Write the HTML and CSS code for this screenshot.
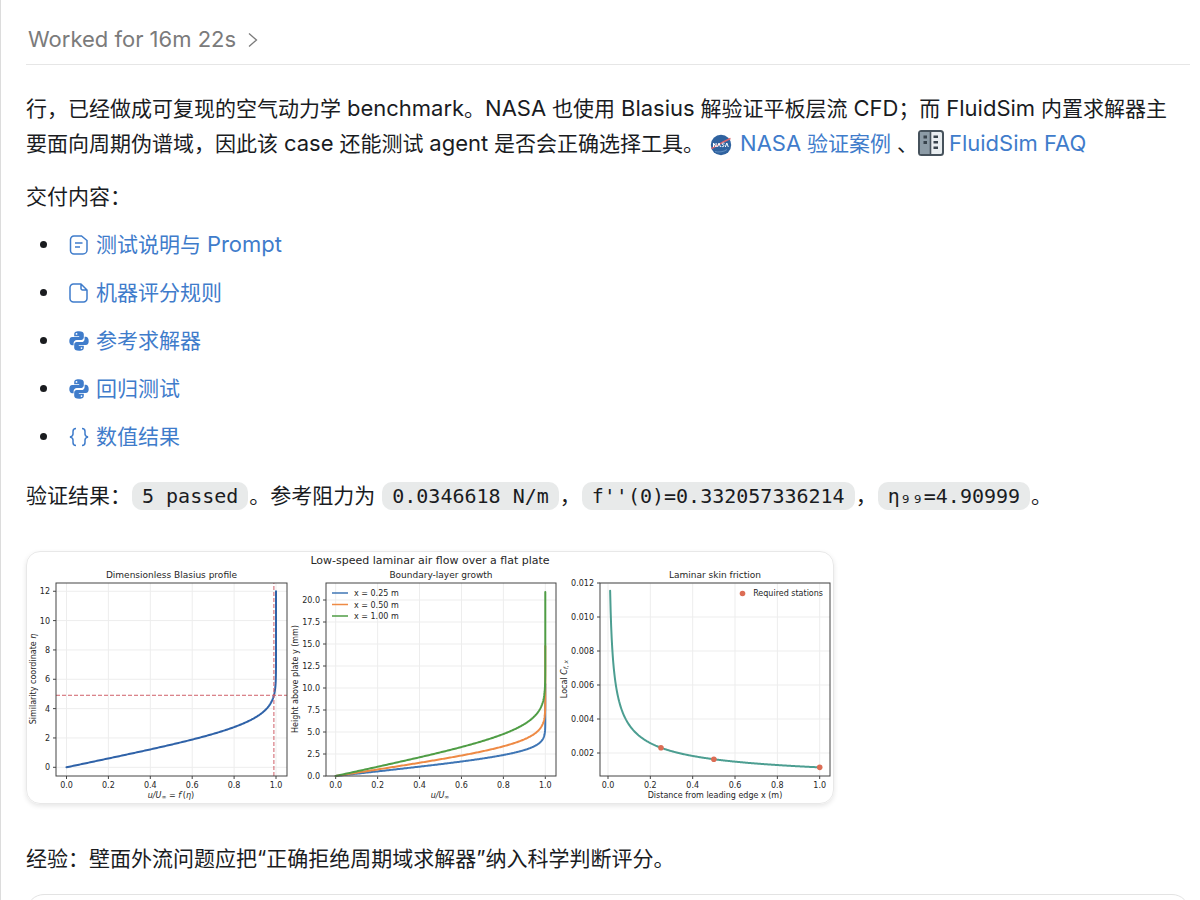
FILE: index.html
```html
<!DOCTYPE html>
<html lang="zh-CN">
<head>
  <meta charset="UTF-8" />
  <meta name="viewport" content="width=device-width, initial-scale=1.0"/>
  <title>Blasius benchmark</title>
  <link rel="stylesheet" href="styles.css">
</head>
<body>

  <!-- Shared icons -->
  <svg class="sprite" aria-hidden="true">
    <symbol id="python" viewBox="0 0 20 20">
      <path fill="currentColor" fill-rule="evenodd" d="M9.9.3c-3.700 0-4.700 1.300-4.700 3v2h5v.6H3.300C1.300 5.900.3 7.500.3 10s1.100 4.200 2.900 4.200h1.400v-2.100c0-1.800 1.400-3.200 3.200-3.200h4.500c1.400 0 2.500-1.100 2.500-2.600v-3C14.800 1.400 13.200.3 9.900.3zM7.500 2a.9.9 0 1 1 0 1.800.9.9 0 0 1 0-1.800z"/>
      <path fill="currentColor" fill-rule="evenodd" d="M10.100 19.700c3.700 0 4.700-1.300 4.700-3v-2h-5v-.6h6.900c2 0 3-1.600 3-4.100s-1.100-4.200-2.900-4.200h-1.200v2.100c0 1.800-1.400 3.200-3.200 3.200H7.700c-1.400 0-2.500 1.100-2.500 2.600v3c0 1.900 1.600 3 4.900 3zM12.500 18a.9.9 0 1 1 0-1.800.9.9 0 0 1 0 1.800z"/>
    </symbol>
  </svg>

  <header class="topbar">
    <button class="worked" type="button">Worked for 16m 22s
      <svg width="10" height="16" viewBox="0 0 10 16"><path d="M1 1.500L8.500 8L1 14.500" fill="none" stroke="currentColor" stroke-width="1.300"/></svg>
    </button>
  </header>

  <main class="content">
    <p>行，已经做成可复现的空气动力学 <span class="en">benchmark</span>。<span class="en">NASA</span> 也使用 <span class="en">Blasius</span> 解验证平板层流 <span class="en">CFD</span>；而 <span class="en">FluidSim</span> 内置求解器主要面向周期伪谱域，因此该 <span class="en">case</span> 还能测试 <span class="en">agent</span> 是否会正确选择工具。<a class="source" href="#nasa"><svg class="nasa" width="22" height="22" viewBox="0 0 22 22">
        <circle cx="11" cy="11" r="10.200" fill="#2f629f"/>
        <path d="M1.500 14.500C7 12 14 7 20.500 4.500" fill="none" stroke="#d9636b" stroke-width="1.500"/>
        <path d="M3.500 13V9l2.600 4V9M7.500 13l1.500-4 1.500 4M14.500 9.300c-2.600-.8-3.200 1.100-1.500 1.500s1.300 2.300-1.300 1.700M15.300 13l1.500-4 1.500 4" fill="none" stroke="#fff" stroke-width="1"/>
        <path d="M5 17.500c3 1 9 .5 12-2" fill="none" stroke="#6c98c9" stroke-width=".8"/>
      </svg><span class="en">NASA</span> 验证案例</a> 、<a class="source" href="#faq"><svg class="book" width="26" height="26" viewBox="0 0 26 26">
        <rect x="1" y="1" width="24" height="24" rx="2.500" fill="#e8edf0" stroke="#46525c" stroke-width="2"/>
        <path d="M2 2h10v22H2z" fill="#8c9ba6"/>
        <path d="M12.500 1v24" stroke="#46525c" stroke-width="1.600"/>
        <path d="M5.500 5.500h3.500v3H5.500zM5.500 11h3.500v3H5.500zM15.500 5.500h4.500v2.500h-4.500zM15.500 11h4.500v2.500h-4.500zM15.500 16.500h4.500V19h-4.500z" fill="#38434c"/>
      </svg><span class="en">FluidSim FAQ</span></a></p>

    <p class="intro">交付内容：</p>

    <ul class="files">
      <li><a href="#prompt"><svg width="20" height="20" viewBox="0 0 20 20" fill="none" stroke="currentColor" stroke-width="1.500"><path d="M5 1h7.500L18 5.500V15a4 4 0 0 1-4 4H5a3.500 3.500 0 0 1-3.500-3.500v-11A3.500 3.500 0 0 1 5 1zM6 8h7.500M6 12h5"/></svg><span>测试说明与 <span class="en">Prompt</span></span></a></li>
      <li><a href="#rules"><svg width="20" height="20" viewBox="0 0 20 20" fill="none" stroke="currentColor" stroke-width="1.500" stroke-linejoin="round"><path d="M4.500 1H12l6 6v8.500a3.500 3.500 0 0 1-3.500 3.500h-10A3.500 3.500 0 0 1 1 15.500v-11A3.500 3.500 0 0 1 4.500 1zM12 1v4.500A1.500 1.500 0 0 0 13.500 7H18"/></svg>机器评分规则</a></li>
      <li><a href="#solver"><svg width="20" height="20"><use href="#python"/></svg>参考求解器</a></li>
      <li><a href="#tests"><svg width="20" height="20"><use href="#python"/></svg>回归测试</a></li>
      <li><a href="#results"><svg width="20" height="20" viewBox="0 0 20 20" fill="none" stroke="currentColor" stroke-width="1.500"><path d="M7 1.500C4.500 1.500 4 2.500 4 4.500v2.500C4 9 3 9.500 1 10c2 .5 3 1 3 3v2.500c0 2 .5 3 3 3M13 1.500c2.500 0 3 1 3 3v2.500c0 2 1 2.500 3 3-2 .5-3 1-3 3v2.500c0 2-.5 3-3 3"/></svg>数值结果</a></li>
    </ul>

    <p>验证结果：<code>5 passed</code>。参考阻力为 <code>0.0346618 N/m</code>，<code>f''(0)=0.332057336214</code>，<code>η₉₉=4.90999</code>。</p>

    <figure class="figure">
      <svg id="chart" viewBox="0 0 806 251" role="img" aria-label="Low-speed laminar air flow over a flat plate"></svg>
    </figure>

    <p>经验：壁面外流问题应把“正确拒绝周期域求解器”纳入科学判断评分。</p>

    <section class="next-card"></section>
  </main>

  <script src="chart.js"></script>
</body>
</html>
```
FILE: styles.css
```css
* {
  box-sizing: border-box;
}

html {
  scrollbar-width: none;
}

body {
  margin: 0;
  min-height: 100vh;
  padding: 0 10px 0 25px;
  border-left: 1px solid #dcdcdc;
  background: #fff;
  color: #1a1c1f;
  font-family: Inter, "Noto Sans CJK SC", sans-serif;
  font-size: 21px;
  line-height: 35px;
}

.sprite {
  position: absolute;
  width: 0;
  height: 0;
}

.topbar {
  padding: 22px 0 7px;
  border-bottom: 1px solid #e6e6e6;
}

.worked {
  display: flex;
  align-items: center;
  gap: 12px;
  padding: 0 2px;
  border: none;
  background: none;
  color: #7b7b7b;
  font: inherit;
  font-size: 22px;
  cursor: pointer;
}

.content {
  padding-top: 26px;
}

p {
  margin: 0 0 18px;
  padding-right: 12px;
}

.intro {
  margin-bottom: 13px;
}

/* latin words run a little larger than the Chinese text */
.en {
  font-size: 22px;
}

a {
  color: #3f7ccb;
  text-decoration: none;
}

a:hover {
  text-decoration: underline;
}

.source svg {
  vertical-align: -5px;
}

.nasa {
  margin: 0 8px 0 6px;
}

.book {
  margin-right: 5px;
}

.files {
  list-style: none;
  margin: 0 0 24px;
  padding: 0 0 0 14px;
  display: grid;
  gap: 13px;
}

.files li {
  display: flex;
  align-items: center;
  gap: 22px;
}

.files li::before {
  content: "";
  width: 7px;
  height: 7px;
  border-radius: 50%;
  background: #1a1c1f;
}

.files a {
  display: flex;
  align-items: center;
  gap: 7px;
}

code {
  margin: 0 1px;
  padding: 2px 10px;
  border-radius: 10px;
  background: #e8eaea;
  font-family: "DejaVu Sans Mono", monospace;
  font-size: 20px;
}

.figure {
  width: 70%;
  max-width: 808px;
  margin: 37px 0;
  border: 1px solid #e8e8e8;
  border-radius: 14px;
  box-shadow: 0 2px 5px rgba(0,0,0,0.1);
  overflow: hidden;
}

.figure svg {
  display: block;
  width: 100%;
  font-family: "DejaVu Sans", sans-serif;
  font-size: 8px;
  fill: #262626;
}

.figure .title {
  font-size: 9px;
}

.figure .suptitle {
  font-size: 11px;
}

.figure .italic {
  font-style: italic;
}

.figure .sub {
  font-size: 6px;
}

.grid {
  stroke: #ededed;
  stroke-width: 1;
}

.axis {
  fill: none;
  stroke: #444;
  stroke-width: 1;
}

.curve {
  fill: none;
  stroke-width: 2;
  stroke-linecap: round;
}

.guide {
  stroke: #cf5f68;
  stroke-width: 1;
  stroke-dasharray: 4 2;
}

.next-card {
  height: 80px;
  border: 1px solid #e3e3e3;
  border-radius: 18px;
}
```
FILE: chart.js
```js
const chart = document.getElementById('chart');
const TOP = 31;
const BOTTOM = 224;

function add(tag, attrs, html) {
  const el = document.createElementNS('http://www.w3.org/2000/svg', tag);
  for (const key in attrs) el.setAttribute(key, attrs[key]);
  if (html) el.innerHTML = html;
  chart.appendChild(el);
}

function text(x, y, html, cls, anchor) {
  add('text', { x: x, y: y, class: cls || '', 'text-anchor': anchor || 'middle' }, html);
}

function sideLabel(x, y, html) {
  add('text', { transform: `translate(${x} ${y}) rotate(-90)`, 'text-anchor': 'middle' }, html);
}

// frame, grid lines and tick labels
function axes(p) {
  for (let i = 0; i <= 5; i++) {
    const x = p.x(i / 5);
    add('path', { class: 'grid', d: `M${x} ${TOP}V${BOTTOM}` });
    add('path', { class: 'axis', d: `M${x} ${BOTTOM}v3` });
    text(x, BOTTOM + 12, (i / 5).toFixed(1));
  }
  p.ticks.forEach(t => {
    const y = p.y(t);
    add('path', { class: 'grid', d: `M${p.left} ${y}H${p.right}` });
    add('path', { class: 'axis', d: `M${p.left} ${y}h-3` });
    text(p.left - 6, y + 3, t.toFixed(p.digits), '', 'end');
  });
  text((p.left + p.right) / 2, 26, p.title, 'title');
}

function frame(p) {
  add('rect', { class: 'axis', x: p.left, y: TOP, width: p.right - p.left, height: BOTTOM - TOP });
}

function curve(points, color) {
  const d = 'M' + points.map(q => q[0].toFixed(2) + ' ' + q[1].toFixed(2)).join('L');
  add('path', { class: 'curve', d: d, stroke: color });
}

// Blasius equation: f''' + f f'' / 2 = 0
function blasius() {
  const h = 0.02;
  let f = 0, g = 0, s = 0.332057336;
  const out = [[0, 0]];
  for (let i = 1; i <= 600; i++) {
    const fm = f + g * h / 2;
    const gm = g + s * h / 2;
    const sm = s - f * s * h / 4;
    f += h * gm;
    g += h * sm;
    s -= h * fm * sm / 2;
    out.push([g, i * h]);
  }
  return out;
}

const profile = blasius();

const a = {
  left: 29, right: 260, digits: 0, title: 'Dimensionless Blasius profile',
  ticks: [0, 2, 4, 6, 8, 10, 12],
  x: v => 39.5 + v * 209.5,
  y: v => 215.3 - v * 14.67
};
axes(a);
curve(profile.map(q => [a.x(q[0]), a.y(q[1])]), '#2f62a8');
add('path', { class: 'guide', d: `M${a.left} ${a.y(4.91)}H${a.right}` });
add('path', { class: 'guide', d: `M${a.x(0.99)} ${BOTTOM}V${TOP}` });
frame(a);
text(144, 246, '<tspan class="italic">u/U</tspan><tspan class="sub" dy="1">∞</tspan><tspan dy="-1"> = </tspan><tspan class="italic">f′</tspan>(<tspan class="italic">η</tspan>)');
sideLabel(9, 127, 'Similarity coordinate <tspan class="italic">η</tspan>');

const b = {
  left: 299, right: 529, digits: 1, title: 'Boundary-layer growth',
  ticks: [0, 2.5, 5, 7.5, 10, 12.5, 15, 17.5, 20],
  x: v => 308.7 + v * 209.6,
  y: v => 224 - v * 8.8
};
axes(b);
const stations = [[0.25, '#3f76b5'], [0.5, '#ee8a45'], [1, '#4f9d45']];
stations.forEach((s, i) => {
  const scale = 1.7417 * Math.sqrt(s[0]);
  curve(profile.map(q => [b.x(q[0]), b.y(q[1] * scale)]), s[1]);
  const y = 41 + i * 11.5;
  add('path', { d: `M305 ${y}h16`, stroke: s[1], 'stroke-width': 1.6 });
  text(327, y + 3, `x = ${s[0].toFixed(2)} m`, '', 'start');
});
frame(b);
text(413, 246, '<tspan class="italic">u/U</tspan><tspan class="sub" dy="1">∞</tspan>');
sideLabel(271, 127, 'Height above plate y (mm)');
text(403, 12, 'Low-speed laminar air flow over a flat plate', 'suptitle');

const c = {
  left: 573, right: 803, digits: 3, title: 'Laminar skin friction',
  ticks: [0.002, 0.004, 0.006, 0.008, 0.01, 0.012],
  x: v => 581 + v * 211.7,
  y: v => 201 - (v - 0.002) * 17000
};
axes(c);
const friction = x => 0.001155 / Math.sqrt(x);
const points = [];
for (let x = 0.01; x < 1.001; x += 0.0025) points.push([c.x(x), c.y(friction(x))]);
curve(points, '#4c9e91');
[0.25, 0.5, 1].forEach(x => add('circle', { cx: c.x(x), cy: c.y(friction(x)), r: 2.8, fill: '#dc6d55' }));
add('circle', { cx: 715.5, cy: 41.5, r: 2.8, fill: '#dc6d55' });
text(796, 44, 'Required stations', '', 'end');
frame(c);
text(688, 246, 'Distance from leading edge x (m)');
sideLabel(540, 127, 'Local <tspan class="italic">C</tspan><tspan class="sub italic" dy="1">f, x</tspan>');
```
